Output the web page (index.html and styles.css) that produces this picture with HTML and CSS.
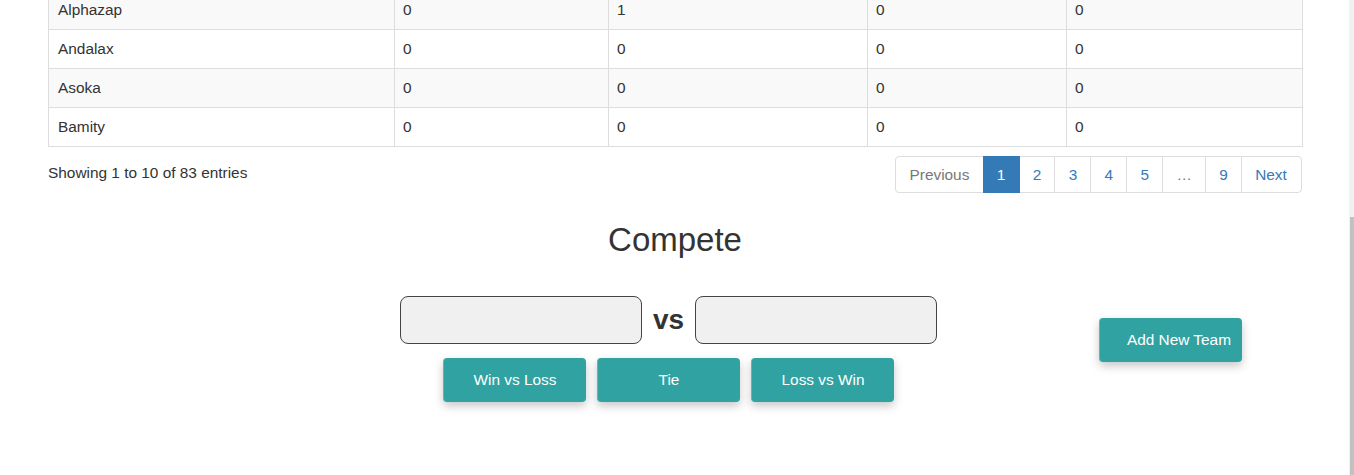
FILE: index.html
```html
<!DOCTYPE html>
<html lang="en">
<head>
<meta charset="utf-8">
<title>Teams</title>
<link rel="stylesheet" href="styles.css">
</head>
<body>
<div class="page">
  <table class="teams">
    <colgroup>
      <col class="c1"><col class="c2"><col class="c3"><col class="c4"><col class="c5">
    </colgroup>
    <tbody>
      <tr class="odd"><td>Alphazap</td><td>0</td><td>1</td><td>0</td><td>0</td></tr>
      <tr><td>Andalax</td><td>0</td><td>0</td><td>0</td><td>0</td></tr>
      <tr class="odd"><td>Asoka</td><td>0</td><td>0</td><td>0</td><td>0</td></tr>
      <tr><td>Bamity</td><td>0</td><td>0</td><td>0</td><td>0</td></tr>
    </tbody>
  </table>

  <div class="table-footer">
    <div class="info">Showing 1 to 10 of 83 entries</div>
    <ul class="pagination">
      <li class="disabled"><a>Previous</a></li>
      <li class="active"><a>1</a></li>
      <li><a>2</a></li>
      <li><a>3</a></li>
      <li><a>4</a></li>
      <li><a>5</a></li>
      <li class="disabled"><a>…</a></li>
      <li><a>9</a></li>
      <li><a>Next</a></li>
    </ul>
  </div>

  <section class="compete">
    <h2 class="compete-title">Compete</h2>
    <div class="controls">
      <div class="match-row">
        <input class="team-input" type="text">
        <span class="vs">vs</span>
        <input class="team-input" type="text">
      </div>
      <div class="result-row">
        <button class="btn-teal">Win vs Loss</button>
        <button class="btn-teal">Tie</button>
        <button class="btn-teal">Loss vs Win</button>
      </div>
    </div>
    <button class="btn-teal add-team">Add New Team</button>
  </section>
</div>
<div class="scrollbar"><div class="thumb"></div></div>
</body>
</html>
```
FILE: styles.css
```css
html, body {
  margin: 0;
  padding: 0;
  height: 475px;
  overflow: hidden;
  background: #fff;
}
body {
  font-family: "Liberation Sans", Arial, sans-serif;
  font-size: 15.4px;
  line-height: 22px;
  color: #333;
}
.page {
  width: 1254px;
  margin-left: 48px;
}
.teams {
  width: 1254px;
  margin-top: -10px;
  border-collapse: collapse;
  table-layout: fixed;
}
.c1 { width: 346px; }
.c2 { width: 214px; }
.c3 { width: 259px; }
.c4 { width: 199px; }
.c5 { width: 236px; }
.teams td {
  border: 1px solid #ddd;
  padding: 8px 8px 8px 8px;
  line-height: 22px;
}
.teams td:first-child {
  padding-left: 9px;
}
.teams tr.odd td {
  background: #f9f9f9;
}
.table-footer {
  display: flex;
  justify-content: space-between;
  align-items: flex-start;
  margin-top: 9px;
}
.info {
  padding-top: 6px;
}
.pagination {
  display: flex;
  list-style: none;
  margin: 0;
  padding: 0;
}
.pagination li a {
  display: block;
  padding: 6.6px 13.2px;
  line-height: 22px;
  border: 1px solid #ddd;
  margin-left: -1px;
  color: #337ab7;
  background: #fff;
}
.pagination li:first-child a {
  margin-left: 0;
  border-radius: 4px 0 0 4px;
}
.pagination li:last-child a {
  border-radius: 0 4px 4px 0;
  padding-right: 14.2px;
}
.pagination li.disabled a {
  color: #777;
}
.pagination li.active a {
  background: #337ab7;
  border-color: #337ab7;
  color: #fff;
  position: relative;
}
.compete {
  position: relative;
  margin-top: 29px;
}
.compete-title {
  margin: 0;
  text-align: center;
  font-size: 33px;
  line-height: 36px;
  font-weight: 500;
  color: #333;
}
.controls {
  margin-top: 38px;
  margin-right: 13px;
  display: flex;
  flex-direction: column;
  align-items: center;
}
.match-row {
  display: flex;
  align-items: center;
}
.team-input {
  box-sizing: border-box;
  width: 242px;
  height: 48px;
  border: 1px solid #444;
  border-radius: 8px;
  background: #f0f0f0;
  margin: 0;
  padding: 0 10px;
  font: inherit;
}
.vs {
  font-size: 28px;
  font-weight: bold;
  margin: 0 11px;
  line-height: 32px;
  color: #333;
}
.result-row {
  display: flex;
  gap: 11px;
  margin-top: 14px;
}
.btn-teal {
  box-sizing: border-box;
  width: 143px;
  height: 44px;
  border: none;
  border-left: 1px solid #5cb8b8;
  border-radius: 4px;
  background: #31a2a2;
  color: #fff;
  font-family: "Liberation Sans", Arial, sans-serif;
  font-size: 15.4px;
  padding: 0;
  box-shadow: 0 4px 10px rgba(0, 0, 0, 0.22);
}
.add-team {
  position: absolute;
  top: 96px;
  right: 60px;
  text-align: right;
  padding-right: 11px;
  font-size: 15.4px;
}
.scrollbar {
  position: fixed;
  top: 0;
  right: 0;
  width: 5px;
  height: 475px;
  background: #f1f1f1;
}
.thumb {
  margin-top: 217px;
  margin-left: 1px;
  width: 4px;
  height: 258px;
  background: #c1c1c1;
}
```
